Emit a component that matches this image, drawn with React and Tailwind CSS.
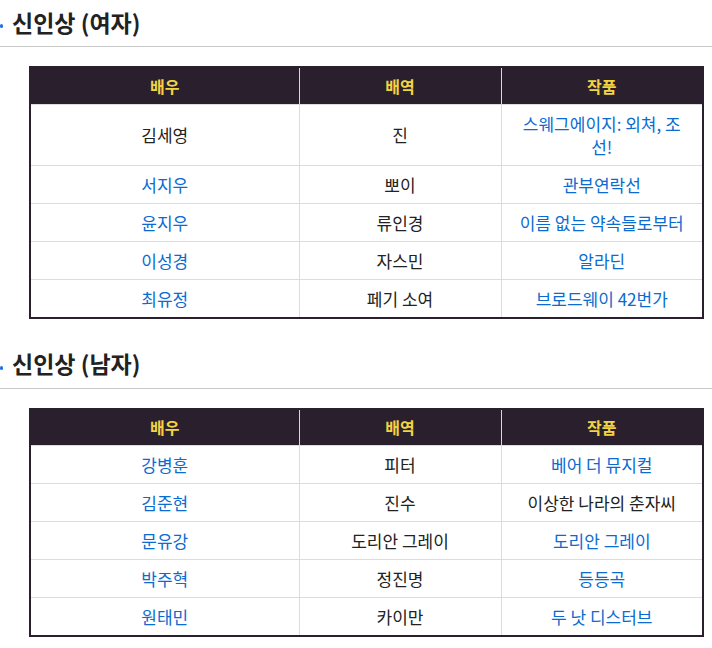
const font = { fontFamily: '"Noto Sans CJK KR", "Noto Sans", sans-serif' };

const womenRows = [
  [{ t: "김세영" }, { t: "진" }, { t: "스웨그에이지: 외쳐, 조선!", link: true }],
  [{ t: "서지우", link: true }, { t: "뽀이" }, { t: "관부연락선", link: true }],
  [{ t: "윤지우", link: true }, { t: "류인경" }, { t: "이름 없는 약속들로부터", link: true }],
  [{ t: "이성경", link: true }, { t: "자스민" }, { t: "알라딘", link: true }],
  [{ t: "최유정", link: true }, { t: "페기 소여" }, { t: "브로드웨이 42번가", link: true }],
];

const menRows = [
  [{ t: "강병훈", link: true }, { t: "피터" }, { t: "베어 더 뮤지컬", link: true }],
  [{ t: "김준현", link: true }, { t: "진수" }, { t: "이상한 나라의 춘자씨" }],
  [{ t: "문유강", link: true }, { t: "도리안 그레이" }, { t: "도리안 그레이", link: true }],
  [{ t: "박주혁", link: true }, { t: "정진명" }, { t: "등등곡", link: true }],
  [{ t: "원태민", link: true }, { t: "카이만" }, { t: "두 낫 디스터브", link: true }],
];

const Heading = ({ children }) => (
  <div className="border-b border-[#c8c8c8] h-[47px] flex items-center">
    <span className="w-[3px] h-[4px] bg-[#1a73e8] rounded-full mt-[6px]" />
    <h2 className="ml-[9px] text-[23px] font-bold text-[#222] leading-none mt-[-2px]">{children}</h2>
  </div>
);

const AwardTable = ({ rows }) => (
  <table className="ml-[29px] w-[675px] border-collapse border-2 border-[#2a1f2d] text-[17px] table-fixed">
    <colgroup>
      <col className="w-[269px]" />
      <col className="w-[202px]" />
      <col />
    </colgroup>
    <thead>
      <tr className="bg-[#2a1f2d] h-[37px]">
        {["배우", "배역", "작품"].map((h, i) => (
          <th
            key={h}
            className={`font-bold text-[16px] text-[#f2d443] ${i > 0 ? "border-l border-[#d8d8d8]" : ""}`}
          >
            {h}
          </th>
        ))}
      </tr>
    </thead>
    <tbody>
      {rows.map((row, r) => (
        <tr key={r} className="h-[37.5px] border-t border-[#dcdcdc]">
          {row.map((c, i) => (
            <td
              key={i}
              className={`text-center px-[14px] py-[7px] leading-[23px] ${i > 0 ? "border-l border-[#dcdcdc]" : ""} ${
                c.link ? "text-[#0b6bd1]" : "text-[#222]"
              }`}
            >
              {c.t}
            </td>
          ))}
        </tr>
      ))}
    </tbody>
  </table>
);

export default function App() {
  return (
    <div className="w-[712px] h-[648px] bg-white overflow-hidden" style={font}>
      <Heading>신인상 (여자)</Heading>
      <div className="h-[19px]" />
      <AwardTable rows={womenRows} />
      <div className="h-[23px]" />
      <Heading>신인상 (남자)</Heading>
      <div className="h-[19px]" />
      <AwardTable rows={menRows} />
    </div>
  );
}
